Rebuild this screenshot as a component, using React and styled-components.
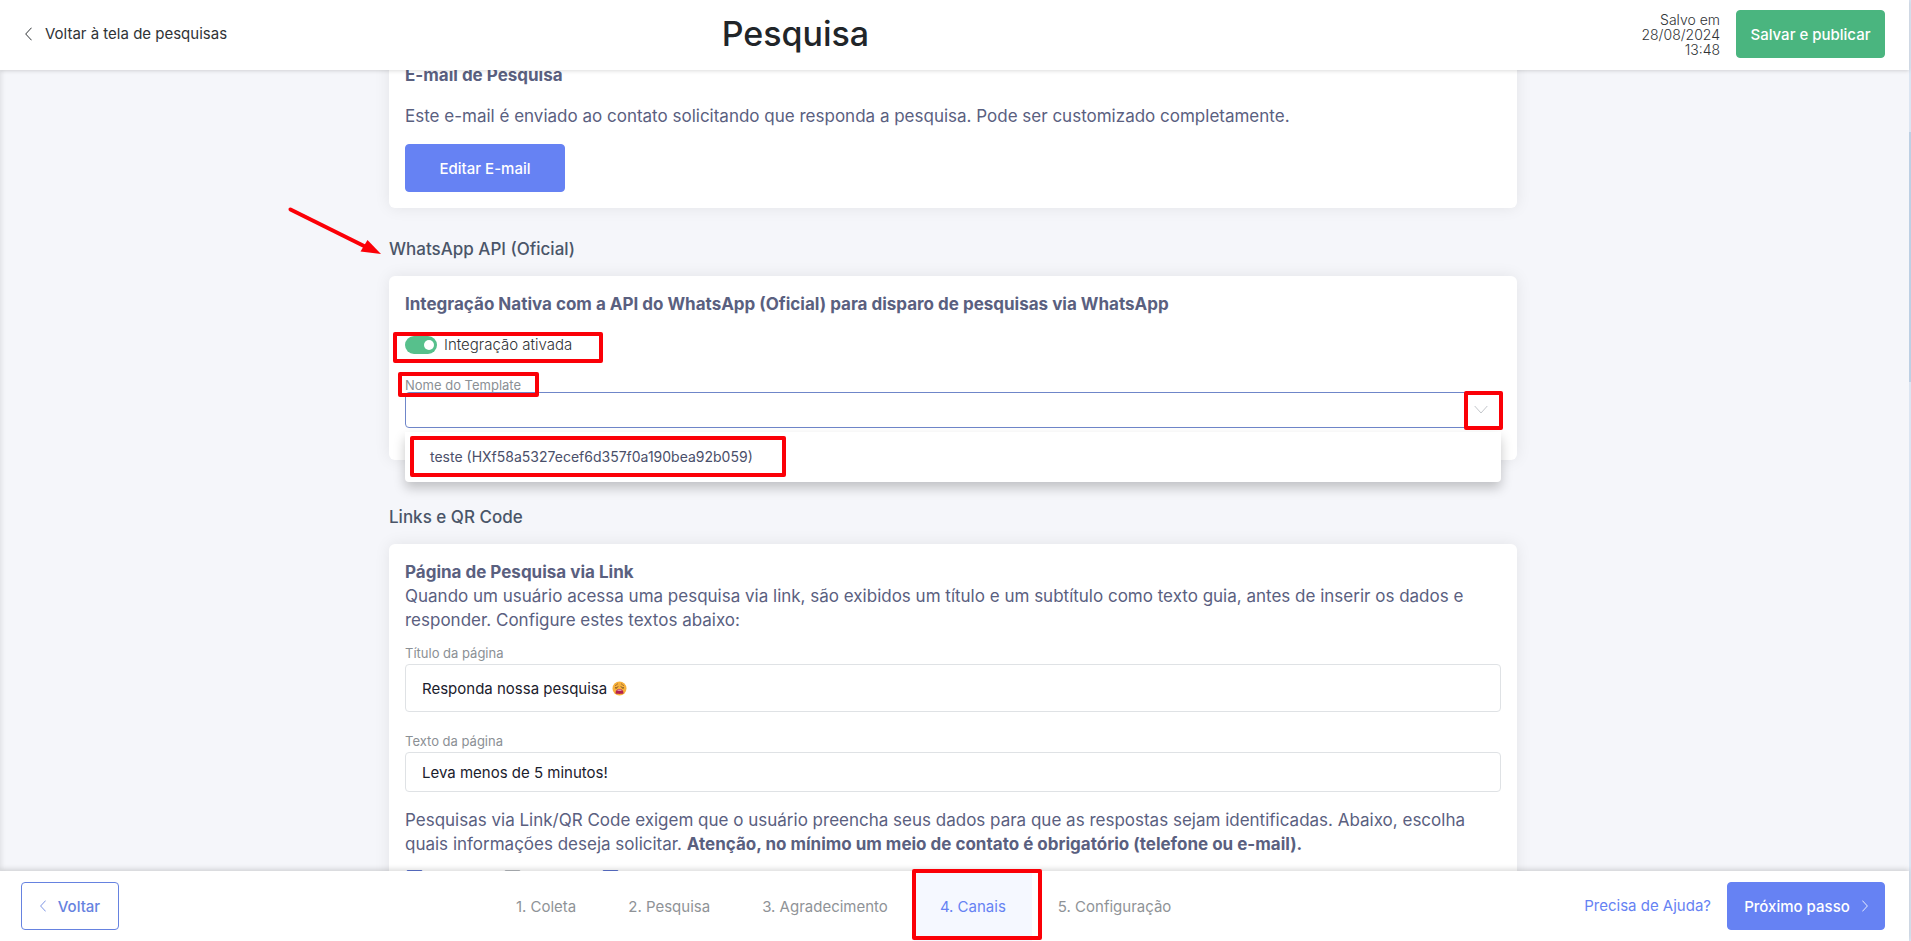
import React, { useState } from 'react';
import styled, { createGlobalStyle, css } from 'styled-components';

const GlobalStyle = createGlobalStyle`
  * {
    box-sizing: border-box;
  }

  body {
    margin: 0;
    background: #f5f6fa;
    font-family: Inter, 'Open Sans', sans-serif;
    font-size: 17px;
    line-height: 24px;
    color: #5a607f;
    overflow: hidden;
  }

  button, input, select {
    font-family: inherit;
  }
`;

const Page = styled.div`
  display: flex;
  flex-direction: column;
  height: 100vh;
  border-right: 2px solid #dbe5f2;
`;

const ScrollThumb = styled.div`
  position: absolute;
  top: 132px;
  right: 0;
  width: 2px;
  height: 250px;
  background: #bdd0e4;
  z-index: 5;
`;

// Header
const Header = styled.header`
  display: grid;
  grid-template-columns: 2fr 1fr 3fr;
  align-items: center;
  flex: none;
  height: 70px;
  padding-bottom: 2px;
  background: white;
  box-shadow: 0 1px 4px rgba(0, 0, 0, 0.14);
  position: relative;
  z-index: 2;
`;

const BackLink = styled.a`
  display: flex;
  align-items: center;
  gap: 13px;
  padding-left: 25px;
  font-size: 15px;
  color: #2f3336;
  text-decoration: none;
`;

const PageTitle = styled.h1`
  margin: 0;
  font-size: 34px;
  font-weight: 500;
  line-height: 40px;
  color: #212529;
  justify-self: center;
`;

const HeaderActions = styled.div`
  display: flex;
  align-items: center;
  justify-content: flex-end;
  gap: 16px;
  padding-right: 24px;
`;

const SavedAt = styled.p`
  width: 90px;
  margin: 0;
  font-size: 14px;
  font-weight: 300;
  line-height: 15px;
  color: #303336;
  text-align: right;
`;

const Button = styled.button`
  display: flex;
  align-items: center;
  justify-content: center;
  gap: 12px;
  height: 48px;
  width: ${props => props.$width};
  border: 1px solid ${props => props.$color};
  border-radius: 4px;
  background: ${props => (props.$outline ? 'white' : props.$color)};
  color: ${props => (props.$outline ? props.$color : 'white')};
  font-size: 15px;
  font-weight: 500;
  padding: 0;
  white-space: nowrap;
  cursor: pointer;
`;

// Content
const Main = styled.main`
  flex: 1;
  min-height: 0;
  overflow: hidden;
  padding-right: 3px;
  box-shadow: inset 4px 0 4px -2px rgba(0, 0, 0, 0.08);
`;

const Content = styled.div`
  max-width: 1128px;
  margin: -23px auto 0;
`;

const Card = styled.section`
  padding: 16px;
  background: white;
  border-radius: 6px;
  box-shadow: 0 0 16px rgba(0, 0, 0, 0.08);
`;

const SectionTitle = styled.h2`
  margin: ${props => props.$top || '29px'} 0 15px;
  font-size: 17px;
  font-weight: 500;
  line-height: 24px;
  color: #4a5568;
`;

const CardTitle = styled.h3`
  margin: 0;
  font-size: 17px;
  font-weight: 700;
  line-height: 24px;
`;

const Text = styled.p`
  margin: ${props => props.$margin || '0'};
`;

const SwitchLabel = styled.label`
  display: flex;
  align-items: center;
  gap: 7px;
  width: max-content;
  margin-top: 17px;
  font-size: 15px;
  font-weight: 300;
  color: #303336;
`;

const Switch = styled.input`
  appearance: none;
  width: 32px;
  height: 18px;
  margin: 0;
  padding: 4px 3px;
  border-radius: 9px;
  background: #57c08c;
  display: flex;
  justify-content: flex-end;

  &::before {
    content: '';
    width: 10px;
    height: 10px;
    border-radius: 50%;
    background: white;
  }
`;

const Field = styled.div`
  position: relative;
  margin-top: ${props => props.$top};
  margin-bottom: 16px;
`;

const FieldLabel = styled.label`
  display: block;
  font-size: 13px;
  line-height: 14px;
  color: #8b9095;
`;

const inputBase = css`
  display: block;
  width: 100%;
  border-radius: 4px;
  background: white;
  font-size: 15px;
  color: #1a202c;
  outline: none;
`;

const TextInput = styled.input`
  ${inputBase}
  height: ${props => props.$height};
  margin-top: 4px;
  padding: 0 16px;
  border: 1px solid #dfe2e5;
`;

const TemplateSelect = styled.select`
  ${inputBase}
  appearance: none;
  height: 36px;
  border: 1px solid #6f86c9;
  padding: 0 16px;
`;

const SelectArrow = styled.svg`
  position: absolute;
  right: 13px;
  bottom: 14px;
  pointer-events: none;
`;

const Options = styled.ul`
  position: absolute;
  top: 100%;
  left: 0;
  right: 0;
  margin: 4px 0 0;
  padding: 13px 25px;
  list-style: none;
  background: white;
  border-radius: 0 0 4px 4px;
  box-shadow: 0 6px 12px rgba(0, 0, 0, 0.22);
  font-size: 14px;
  color: #4a4f6a;
`;

const EmojiIcon = styled.svg`
  position: absolute;
  left: 207px;
  bottom: 16px;
`;

const Checks = styled.div`
  display: flex;
  gap: 80px;
  margin-top: 14px;
`;

const Check = styled.input`
  appearance: none;
  width: 17px;
  height: 17px;
  margin: 0 0 0 1px;
  border-radius: 2px;
  border: 1px solid ${props => (props.checked ? '#5b73cf' : '#b4b8bd')};
  background: ${props => (props.checked ? '#5b73cf' : 'white')};
`;

// Footer
const Footer = styled.footer`
  display: flex;
  align-items: center;
  justify-content: space-between;
  flex: none;
  height: 70px;
  padding: 0 24px 0 21px;
  background: white;
  box-shadow: 0 -2px 5px rgba(0, 0, 0, 0.14);
  position: relative;
  z-index: 2;
`;

const Steps = styled.nav`
  display: flex;
  align-self: stretch;
  margin-right: 16px;
`;

const Step = styled.a`
  display: flex;
  align-items: center;
  padding: 2px 26px 0;
  font-size: 15px;
  color: ${props => (props.$active ? '#6682f3' : '#8f9397')};
  background: ${props => (props.$active ? '#f5f8ff' : 'transparent')};
  text-decoration: none;
  position: relative;
`;

const FooterActions = styled.div`
  display: flex;
  align-items: center;
  gap: 16px;
`;

const HelpLink = styled.a`
  font-size: 15px;
  color: #6682f3;
  text-decoration: none;
`;

// Red markers drawn over the interface
const Marker = styled.span`
  position: absolute;
  top: ${props => props.$top};
  left: ${props => props.$left};
  right: ${props => props.$right};
  width: ${props => props.$width};
  height: ${props => props.$height};
  border: 4px solid #fb0007;
  border-radius: 2px;
  pointer-events: none;
  z-index: 3;
`;

const Anchor = styled.div`
  position: relative;
`;

const Arrow = styled.svg`
  position: absolute;
  left: -102px;
  top: -33px;
`;

const Chevron = ({ right, size = 14 }) => (
  <svg width={size / 2} height={size} viewBox="0 0 7 14" fill="none" stroke="currentColor" strokeLinecap="round" aria-hidden="true">
    <path d={right ? 'M.7 1 6.3 7 .7 13' : 'M6.3 1 .7 7l5.6 6'} />
  </svg>
);

const WearyFace = () => (
  <EmojiIcon width="15" height="15" viewBox="0 0 30 30" aria-hidden="true">
    <circle cx="15" cy="15" r="14" fill="#f7b13c" />
    <path d="M6 9c2 0 4-1 5-4M24 9c-2 0-4-1-5-4" stroke="#8a5a2c" strokeWidth="1.6" fill="none" />
    <path d="M6 13c2 2 4 1 6-2M24 13c-2 2-4 1-6-2" stroke="#5c3820" strokeWidth="2" fill="none" />
    <path d="M7 25c0-6 3-9 8-9s8 3 8 9c-3 1-13 1-16 0Z" fill="#b3204f" />
    <path d="M11 18c2-1 6-1 8 0v1h-8Z" fill="#fff" />
  </EmojiIcon>
);

const steps = ['1. Coleta', '2. Pesquisa', '3. Agradecimento', '4. Canais', '5. Configuração'];

const App = () => {
  const [active, setActive] = useState(true);
  const [template, setTemplate] = useState('');
  const [title, setTitle] = useState('Responda nossa pesquisa');
  const [text, setText] = useState('Leva menos de 5 minutos!');
  const [fields, setFields] = useState([true, false, true]);

  const toggleField = (index) => {
    setFields(prev => prev.map((value, i) => (i === index ? !value : value)));
  };

  return (
    <>
      <GlobalStyle />
      <ScrollThumb />
      <Page>
        <Header>
          <BackLink href="#">
            <Chevron />
            Voltar à tela de pesquisas
          </BackLink>
          <PageTitle>Pesquisa</PageTitle>
          <HeaderActions>
            <SavedAt>Salvo em 28/08/2024 13:48</SavedAt>
            <Button $color="#4ab57f" $width="149px">Salvar e publicar</Button>
          </HeaderActions>
        </Header>

        <Main>
          <Content>
            <Card>
              <CardTitle>E-mail de Pesquisa</CardTitle>
              <Text $margin="17px 0 16px">
                Este e-mail é enviado ao contato solicitando que responda a pesquisa. Pode ser customizado completamente.
              </Text>
              <Button $color="#6682f3" $width="160px">Editar E-mail</Button>
            </Card>

            <Anchor>
              <SectionTitle>WhatsApp API (Oficial)</SectionTitle>
              <Arrow width="96" height="52" viewBox="0 0 96 52" aria-hidden="true">
                <path d="M3.500 5.500 77 42" stroke="#fb0007" strokeWidth="4" strokeLinecap="round" />
                <path d="M94 50 73.500 47.500 80.500 36Z" fill="#fb0007" />
              </Arrow>
            </Anchor>
            <Card>
              <CardTitle>Integração Nativa com a API do WhatsApp (Oficial) para disparo de pesquisas via WhatsApp</CardTitle>
              <Anchor>
                <SwitchLabel>
                  <Switch type="checkbox" role="switch" checked={active} onChange={() => setActive(!active)} />
                  Integração ativada
                </SwitchLabel>
                <Marker $top="-1px" $left="-12px" $width="210px" $height="31px" />
              </Anchor>
              <Field $top="21px">
                <FieldLabel htmlFor="template">Nome do Template</FieldLabel>
                <TemplateSelect id="template" value={template} onChange={e => setTemplate(e.target.value)}>
                  <option value="" aria-label="Nenhum" />
                  <option value="teste">teste (HXf58a5327ecef6d357f0a190bea92b059)</option>
                </TemplateSelect>
                <SelectArrow width="14" height="9" viewBox="0 0 14 9" fill="none" stroke="#c3c6ca">
                  <path d="M.7 1 7 8l6.300-7" />
                </SelectArrow>
                <Marker $top="-6px" $left="-7px" $width="141px" $height="25px" />
                <Marker $top="13px" $right="-2px" $width="39px" $height="39px" />
                <Options>
                  <li>teste (HXf58a5327ecef6d357f0a190bea92b059)</li>
                  <Marker as="li" $top="4px" $left="5px" $width="376px" $height="41px" />
                </Options>
              </Field>
            </Card>

            <SectionTitle $top="45px">Links e QR Code</SectionTitle>
            <Card>
              <CardTitle>Página de Pesquisa via Link</CardTitle>
              <Text>
                Quando um usuário acessa uma pesquisa via link, são exibidos um título e um subtítulo como texto guia, antes de inserir os dados e responder. Configure estes textos abaixo:
              </Text>
              <Field $top="14px">
                <FieldLabel htmlFor="page-title">Título da página</FieldLabel>
                <TextInput id="page-title" $height="48px" value={title} onChange={e => setTitle(e.target.value)} />
                <WearyFace />
              </Field>
              <Field $top="22px">
                <FieldLabel htmlFor="page-text">Texto da página</FieldLabel>
                <TextInput id="page-text" $height="40px" value={text} onChange={e => setText(e.target.value)} />
              </Field>
              <Text>
                Pesquisas via Link/QR Code exigem que o usuário preencha seus dados para que as respostas sejam identificadas. Abaixo, escolha quais informações deseja solicitar. <strong>Atenção, no mínimo um meio de contato é obrigatório (telefone ou e-mail).</strong>
              </Text>
              <Checks>
                {['Nome', 'E-mail', 'Telefone'].map((name, index) => (
                  <Check key={name} type="checkbox" aria-label={name} checked={fields[index]} onChange={() => toggleField(index)} />
                ))}
              </Checks>
            </Card>
          </Content>
        </Main>

        <Footer>
          <Button $outline $color="#6682e0" $width="98px">
            <Chevron size={12} />
            Voltar
          </Button>
          <Steps>
            {steps.map(step => (
              <Step key={step} href="#" $active={step === '4. Canais'}>
                {step}
                {step === '4. Canais' && <Marker $top="-2px" $left="-2px" $right="-10px" $height="71px" />}
              </Step>
            ))}
          </Steps>
          <FooterActions>
            <HelpLink href="#">Precisa de Ajuda?</HelpLink>
            <Button $color="#6682f3" $width="158px">
              Próximo passo
              <Chevron right size={12} />
            </Button>
          </FooterActions>
        </Footer>
      </Page>
    </>
  );
};

export default App;
